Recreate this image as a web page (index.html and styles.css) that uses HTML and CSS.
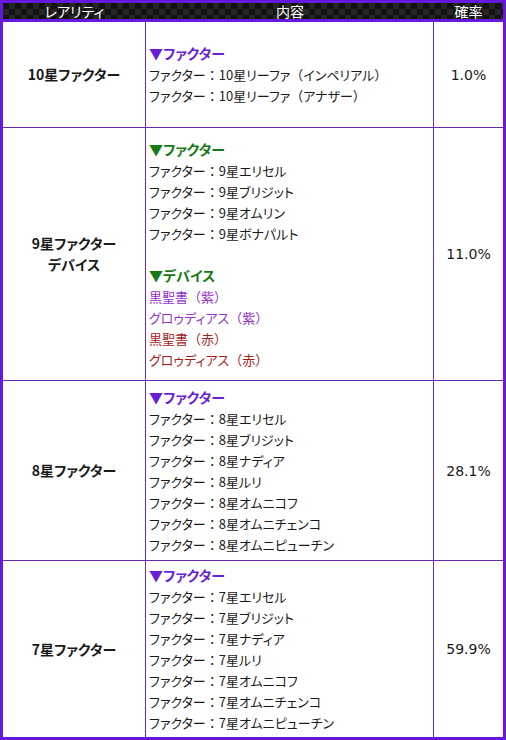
FILE: index.html
```html
<!DOCTYPE html>
<html lang="ja">
<head>
<meta charset="utf-8">
<link rel="stylesheet" href="styles.css">
</head>
<body>
<div class="table">
  <div class="head">
    <div class="hcell">レアリティ</div>
    <div class="hcell">内容</div>
    <div class="hcell">確率</div>
  </div>
  <div class="body">
    <div class="cell label">10星ファクター</div>
    <div class="cell content">
      <div class="sec purple">▼ファクター</div>
      <div>ファクター<span class="fw">：</span>10星リーファ<span class="fw">（</span>インペリアル<span class="fw">）</span></div>
      <div>ファクター<span class="fw">：</span>10星リーファ<span class="fw">（</span>アナザー<span class="fw">）</span></div>
    </div>
    <div class="cell rate">1.0%</div>

    <div class="cell label">9星ファクター<br>デバイス</div>
    <div class="cell content">
      <div class="sec green">▼ファクター</div>
      <div>ファクター<span class="fw">：</span>9星エリセル</div>
      <div>ファクター<span class="fw">：</span>9星ブリジット</div>
      <div>ファクター<span class="fw">：</span>9星オムリン</div>
      <div>ファクター<span class="fw">：</span>9星ボナパルト</div>
      <div class="blank"></div>
      <div class="sec green">▼デバイス</div>
      <div class="dev-purple">黒聖書<span class="fw">（</span>紫<span class="fw">）</span></div>
      <div class="dev-purple">グロゥディアス<span class="fw">（</span>紫<span class="fw">）</span></div>
      <div class="dev-red">黒聖書<span class="fw">（</span>赤<span class="fw">）</span></div>
      <div class="dev-red">グロゥディアス<span class="fw">（</span>赤<span class="fw">）</span></div>
    </div>
    <div class="cell rate">11.0%</div>

    <div class="cell label">8星ファクター</div>
    <div class="cell content">
      <div class="sec purple">▼ファクター</div>
      <div>ファクター<span class="fw">：</span>8星エリセル</div>
      <div>ファクター<span class="fw">：</span>8星ブリジット</div>
      <div>ファクター<span class="fw">：</span>8星ナディア</div>
      <div>ファクター<span class="fw">：</span>8星ルリ</div>
      <div>ファクター<span class="fw">：</span>8星オムニコフ</div>
      <div>ファクター<span class="fw">：</span>8星オムニチェンコ</div>
      <div>ファクター<span class="fw">：</span>8星オムニピューチン</div>
    </div>
    <div class="cell rate">28.1%</div>

    <div class="cell label">7星ファクター</div>
    <div class="cell content">
      <div class="sec purple">▼ファクター</div>
      <div>ファクター<span class="fw">：</span>7星エリセル</div>
      <div>ファクター<span class="fw">：</span>7星ブリジット</div>
      <div>ファクター<span class="fw">：</span>7星ナディア</div>
      <div>ファクター<span class="fw">：</span>7星ルリ</div>
      <div>ファクター<span class="fw">：</span>7星オムニコフ</div>
      <div>ファクター<span class="fw">：</span>7星オムニチェンコ</div>
      <div>ファクター<span class="fw">：</span>7星オムニピューチン</div>
    </div>
    <div class="cell rate">59.9%</div>
  </div>
</div>
</body>
</html>
```

FILE: styles.css
```css
html, body {
  margin: 0;
  padding: 0;
  background: #ffffff;
}

body {
  font-family: "Noto Sans CJK JP", "Noto Sans", sans-serif;
  font-size: 14px;
  color: #1a1a1a;
}

.table {
  width: 500px;
  border: 3px solid #6619dd;
}

.head {
  display: grid;
  grid-template-columns: 143px 288px 69px;
  height: 16px;
  border-bottom: 3px solid #6619dd;
  background-color: #121212;
  background-image:
    linear-gradient(45deg, #262626 25%, transparent 25%, transparent 75%, #262626 75%),
    linear-gradient(45deg, #262626 25%, transparent 25%, transparent 75%, #262626 75%);
  background-size: 12px 12px;
  background-position: 0 0, 6px 6px;
}

.hcell {
  color: #ffffff;
  text-align: center;
  font-size: 14px;
  line-height: 16px;
  font-feature-settings: "palt";
}

.body {
  display: grid;
  grid-template-columns: 142px 287px 69px;
  grid-template-rows: 105px 252px 179px 176px;
  gap: 1px;
  background: #6a2bb0;
}

.cell {
  background: #ffffff;
  display: flex;
  flex-direction: column;
  justify-content: center;
}

.label {
  align-items: center;
  text-align: center;
  font-weight: bold;
  line-height: 21px;
  font-feature-settings: "palt";
}

.content {
  padding-left: 3px;
  font-size: 13px;
  line-height: 21px;
  font-feature-settings: "palt";
}

.content .fw {
  font-feature-settings: normal;
}

.blank {
  height: 21px;
}

.sec {
  font-weight: bold;
  font-size: 14px;
}

.purple {
  color: #6a1fd6;
}

.green {
  color: #167a16;
}

.dev-purple {
  color: #9430c8;
}

.dev-red {
  color: #a61c1c;
}

.rate {
  align-items: center;
  font-family: "DejaVu Sans", sans-serif;
  font-size: 14px;
}
```
